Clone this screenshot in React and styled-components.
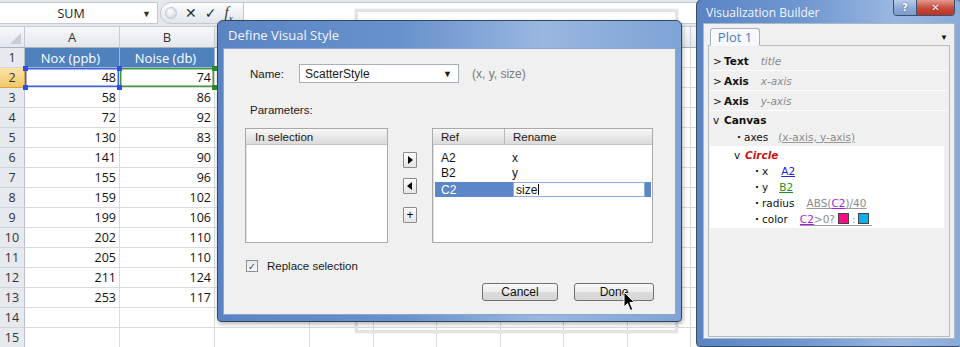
import React from "react";
import styled, { createGlobalStyle } from "styled-components";

const GlobalStyle = createGlobalStyle`
  html, body { margin: 0; padding: 0; background: #fff; }
  body { width: 960px; height: 347px; overflow: hidden; }
  * { box-sizing: border-box; }
`;

const Screen = styled.div`
  position: relative;
  width: 960px;
  height: 347px;
  overflow: hidden;
  background: #fff;
  font-family: "Open Sans", sans-serif;
`;

/* ---------- spreadsheet (background) ---------- */
const FormulaBar = styled.div`
  display: flex;
  height: 27px;
  padding: 2px 0 2px 0;
  background: #e4e8ed;
  border-bottom: 1px solid #c6ccd4;
`;

const NameBox = styled.div`
  display: flex;
  align-items: center;
  width: 158px;
  background: #fff;
  border: 1px solid #c3c9d1;
  border-left: none;
  font-size: 12.5px;
  color: #222;
  span {
    flex: 1;
    text-align: center;
  }
  i {
    font-style: normal;
    font-size: 9px;
    color: #333;
    margin-right: 6px;
  }
`;

const FxPill = styled.div`
  display: flex;
  align-items: center;
  gap: 8px;
  width: 84px;
  padding-left: 4px;
  margin-left: 2px;
  border: 1px solid #c3c9d1;
  border-radius: 11px 0 0 11px;
  background: linear-gradient(#fbfcfd, #e2e6eb);
  color: #2e2e2e;
  font-family: "DejaVu Sans", sans-serif;
  font-size: 14px;
  font-weight: bold;
`;

const Dot = styled.span`
  width: 12px;
  height: 12px;
  border-radius: 50%;
  background: radial-gradient(circle at 40% 35%, #fff, #c9ced5);
  border: 1px solid #c2c7ce;
`;

const Fx = styled.span`
  font-family: "Liberation Serif", serif;
  font-style: italic;
  font-weight: normal;
  font-size: 15px;
  color: #333;
  sub {
    font-size: 9px;
  }
`;

const FormulaInput = styled.div`
  flex: 1;
  background: #fff;
  border: 1px solid #c3c9d1;
  border-left: none;
`;

const Sheet = styled.div`
  display: grid;
  grid-template-columns: 25px 95px 95px 95px repeat(10, 63.5px);
  grid-template-rows: 21px;
  grid-auto-rows: 20px;
  font-size: 12.5px;
  color: #111;
`;

const Corner = styled.div`
  position: relative;
  background: linear-gradient(#f6f7f9, #e4e8ed);
  border-right: 1px solid #c3c9d1;
  border-bottom: 1px solid #a9b0ba;
  &::after {
    content: "";
    position: absolute;
    right: 3px;
    bottom: 3px;
    border-left: 11px solid transparent;
    border-bottom: 11px solid #c9ced6;
  }
`;

const ColHead = styled.div`
  display: flex;
  align-items: center;
  justify-content: center;
  background: linear-gradient(#f7f8fa, #e3e7ec);
  border-right: 1px solid #c8cdd4;
  border-bottom: 1px solid #a9b0ba;
  font-size: 13px;
  color: #333;
`;

const RowHead = styled.div`
  display: flex;
  align-items: center;
  justify-content: center;
  background: ${(p) =>
    p.$active ? "linear-gradient(#fbe3a8, #f2c766)" : "#e6e9ee"};
  border-right: 1px solid ${(p) => (p.$active ? "#d9a443" : "#b9c0c9")};
  border-bottom: 1px solid ${(p) => (p.$active ? "#d9a443" : "#d0d5dc")};
  color: #333;
`;

const Cell = styled.div`
  position: relative;
  display: flex;
  align-items: center;
  justify-content: ${(p) => (p.$head ? "center" : "flex-end")};
  padding-right: 3px;
  background: ${(p) => (p.$head ? "#4f81bd" : "#fff")};
  color: ${(p) => (p.$head ? "#fff" : "#111")};
  font-size: ${(p) => (p.$head ? "13px" : "12.5px")};
  border-right: 1px solid ${(p) => (p.$head ? "#9eb6d6" : "#dadada")};
  border-bottom: 1px solid ${(p) => (p.$head ? "#9eb6d6" : "#dadada")};
  box-shadow: ${(p) =>
    p.$sel === "a"
      ? "inset 0 0 0 1.5px #3e5fe6"
      : p.$sel === "b"
      ? "inset 0 0 0 1.5px #3c9a3c"
      : "none"};
`;

const Handle = styled.span`
  position: absolute;
  width: 5px;
  height: 5px;
  background: ${(p) => p.$c};
  ${(p) => (p.$top ? "top: -2px;" : "bottom: -3px;")}
  ${(p) => (p.$left ? "left: -2px;" : "right: -3px;")}
  z-index: 2;
`;

/* ---------- ghost frame behind the dialog ---------- */
const GhostFrame = styled.div`
  position: absolute;
  left: 355px;
  top: 9px;
  width: 323px;
  height: 324px;
  border: 3px solid #e3e3e3;
  box-shadow: 0 0 1px #c8c8c8;
`;

/* ---------- Define Visual Style dialog ---------- */
const Dialog = styled.div`
  position: absolute;
  left: 217px;
  top: 20px;
  width: 465px;
  height: 302px;
  display: flex;
  flex-direction: column;
  padding: 0 5px 6px 5px;
  border: 1px solid #34455e;
  border-radius: 6px 6px 4px 4px;
  background: linear-gradient(
    90deg,
    #5a83c3 0%,
    #6892cd 40%,
    #9ab7e0 70%,
    #7ea3d6 100%
  );
  box-shadow: 1px 2px 4px rgba(0, 0, 0, 0.3);
`;

const DialogTitle = styled.div`
  height: 27px;
  display: flex;
  align-items: center;
  padding-left: 5px;
  color: #f3f6fb;
  font-family: "Open Sans", sans-serif;
  font-size: 13px;
`;

const DialogBody = styled.div`
  flex: 1;
  display: flex;
  flex-direction: column;
  padding: 15px 21px 0 21px;
  background: #f0f0f0;
  border: 1px solid #8ea7c9;
  font-family: "Liberation Sans", Arial, sans-serif;
  font-size: 11.5px;
  color: #1a1a1a;
`;

const NameRow = styled.div`
  display: flex;
  align-items: center;
  height: 19px;
`;

const Label = styled.span`
  width: ${(p) => p.$w || "auto"};
  padding-left: 5px;
`;

const Combo = styled.div`
  display: flex;
  align-items: center;
  justify-content: space-between;
  width: 160px;
  height: 19px;
  padding: 0 6px 0 5px;
  background: #fff;
  border: 1px solid #a8afb8;
  font-size: 12px;
  i {
    font-style: normal;
    font-size: 9px;
  }
`;

const Hint = styled.span`
  margin-left: 13px;
  color: #7a7a7a;
  font-size: 12px;
`;

const SectionLabel = styled.div`
  margin-top: 20px;
  height: 14px;
  line-height: 14px;
  padding-left: 5px;
`;

const ListsRow = styled.div`
  display: flex;
  margin-top: 11px;
  height: 115px;
`;

const ListBox = styled.div`
  width: ${(p) => p.$w};
  display: flex;
  flex-direction: column;
  background: #fff;
  border: 1px solid #a9a9a9;
  box-shadow: inset 1px 1px 0 #e2e2e2;
`;

const ListHeader = styled.div`
  display: flex;
  height: 16px;
  background: linear-gradient(#f7f7f7, #dadada);
  border-bottom: 1px solid #c4c4c4;
`;

const HeadCell = styled.div`
  display: flex;
  align-items: center;
  width: ${(p) => p.$w || "auto"};
  flex: ${(p) => (p.$w ? "none" : "1")};
  padding-left: ${(p) => p.$pl || "8px"};
  border-right: ${(p) => (p.$w ? "1px solid #b8b8b8" : "none")};
`;

const ListRows = styled.div`
  display: flex;
  flex-direction: column;
  padding-top: 5px;
`;

const ListRow = styled.div`
  display: flex;
  align-items: center;
  height: 15px;
  margin: ${(p) => (p.$sel ? "2px 1px 0 2px" : "0")};
  padding-left: ${(p) => (p.$sel ? "6px" : "8px")};
  background: ${(p) => (p.$sel ? "#5b87c9" : "transparent")};
  color: ${(p) => (p.$sel ? "#fff" : "#111")};
  font-size: 12px;
`;

const RefCol = styled.span`
  width: ${(p) => (p.$sel ? "68px" : "71px")};
`;

const EditBox = styled.span`
  display: flex;
  align-items: center;
  width: 132px;
  height: 15px;
  margin-left: 4px;
  padding-left: 2px;
  background: #fff;
  border: 1px solid #8eb0dd;
  color: #111;
  &::after {
    content: "";
    width: 1px;
    height: 11px;
    margin-left: 1px;
    background: #111;
  }
`;

const ArrowCol = styled.div`
  display: flex;
  flex-direction: column;
  width: 14px;
  margin: 0 15px;
  padding-top: 24px;
`;

const ArrowBtn = styled.button`
  display: flex;
  align-items: center;
  justify-content: center;
  width: 14px;
  height: 16px;
  margin-bottom: ${(p) => p.$mb || "0"};
  padding: 0;
  border: 1px solid #8c8c8c;
  border-radius: 1px;
  background: linear-gradient(#fdfdfd, #e4e4e4);
  color: #000;
  font-size: 12px;
  line-height: 1;
`;

const Triangle = styled.span`
  width: 0;
  height: 0;
  border-top: 4px solid transparent;
  border-bottom: 4px solid transparent;
  ${(p) =>
    p.$dir === "right"
      ? "border-left: 5px solid #000; margin-left: 1px;"
      : "border-right: 5px solid #000; margin-right: 1px;"}
`;

const CheckRow = styled.label`
  display: flex;
  align-items: center;
  gap: 9px;
  margin-top: 17px;
  height: 12px;
  padding-left: 1px;
  font-size: 11.5px;
`;

const CheckBox = styled.span`
  display: flex;
  align-items: center;
  justify-content: center;
  width: 12px;
  height: 12px;
  border: 1px solid #8f8f8f;
  background: linear-gradient(#e9e9e9, #fafafa);
  color: #2c4fab;
  font-size: 10px;
  font-family: "DejaVu Sans", sans-serif;
`;

const ButtonRow = styled.div`
  display: flex;
  justify-content: flex-end;
  gap: 16px;
  margin-top: 11px;
`;

const PushButton = styled.button`
  width: ${(p) => p.$w};
  height: 18px;
  padding: 0;
  border: 1px solid #707070;
  border-radius: 3px;
  background: linear-gradient(#f8f8f8 0%, #ececec 50%, #dcdcdc 51%, #d6d6d6 100%);
  font-family: "Liberation Sans", Arial, sans-serif;
  font-size: 12px;
  color: #111;
`;

const Cursor = styled.svg`
  position: absolute;
  left: 623px;
  top: 291px;
`;

/* ---------- Visualization Builder panel ---------- */
const Builder = styled.div`
  position: absolute;
  left: 696px;
  top: -1px;
  width: 266px;
  height: 348px;
  display: flex;
  flex-direction: column;
  padding: 0 6px 7px 6px;
  border: 1px solid #3a4b63;
  border-radius: 6px 6px 4px 4px;
  background: linear-gradient(
    90deg,
    #5b84c4 0%,
    #6f97d0 40%,
    #9ab7e0 75%,
    #8aabd9 100%
  );
`;

const BuilderTitle = styled.div`
  display: flex;
  height: 23px;
  color: #f3f6fb;
  font-size: 12px;
  span {
    padding: 4px 0 0 3px;
  }
`;

const WinButtons = styled.div`
  display: flex;
  margin-left: auto;
  height: 16px;
  border: 1px solid #3d4f6a;
  border-top: none;
  border-radius: 0 0 4px 4px;
  overflow: hidden;
`;

const WinBtn = styled.div`
  display: flex;
  align-items: center;
  justify-content: center;
  width: ${(p) => p.$w};
  background: ${(p) =>
    p.$close
      ? "linear-gradient(#e39a8e, #c84a3b 55%, #b83424)"
      : "linear-gradient(#b7cbe8, #8eaad6 55%, #7b9bcd)"};
  border-left: ${(p) => (p.$close ? "1px solid #3d4f6a" : "none")};
  color: #fff;
  font-family: "DejaVu Sans", sans-serif;
  font-size: 10px;
  font-weight: bold;
  text-shadow: 0 0 2px rgba(0, 0, 0, 0.5);
`;

const BuilderBody = styled.div`
  flex: 1;
  display: flex;
  flex-direction: column;
  padding: 4px 4px 1px 4px;
  background: #f0f0f0;
  border: 1px solid #aab8cb;
`;

const TabStrip = styled.div`
  display: flex;
  align-items: flex-end;
  height: 17px;
  padding-left: 2px;
  i {
    margin-left: auto;
    align-self: center;
    margin-right: 2px;
    font-style: normal;
    font-size: 8px;
    color: #111;
  }
`;

const Tab = styled.div`
  display: flex;
  align-items: center;
  justify-content: center;
  width: 50px;
  height: 18px;
  margin-bottom: -1px;
  background: #f6f8fb;
  border: 1px solid #a6b0bf;
  border-bottom: 1px solid #f6f8fb;
  border-radius: 3px 3px 0 0;
  color: #4a7cc2;
  font-size: 13px;
  position: relative;
  z-index: 1;
`;

const TreeBox = styled.div`
  flex: 1;
  display: flex;
  flex-direction: column;
  padding: 5px 3px 0 1px;
  background: #f0f0f0;
  border: 1px solid #b6bcc4;
  font-family: "DejaVu Sans", sans-serif;
  font-size: 10.5px;
  color: #111;
`;

const TreeRow = styled.div`
  display: flex;
  align-items: center;
  height: ${(p) => p.$h || "20px"};
  padding-left: ${(p) => p.$indent || "3px"};
  border-bottom: ${(p) => (p.$sep ? "1px solid #fdfdfd" : "none")};
`;

const Toggle = styled.span`
  width: 11px;
  color: #111;
`;

const Bullet = styled.span`
  width: 7px;
  font-weight: bold;
`;

const Node = styled.span`
  font-weight: ${(p) => (p.$bold ? "bold" : "normal")};
  font-style: ${(p) => (p.$italic ? "italic" : "normal")};
  color: ${(p) => p.$color || "#111"};
`;

const Muted = styled.span`
  margin-left: ${(p) => p.$ml || "12px"};
  font-style: ${(p) => (p.$italic ? "italic" : "normal")};
  color: #8a8a8a;
  text-decoration: ${(p) => (p.$u ? "underline" : "none")};
  text-decoration-color: #9a9a9a;
`;

const Ref = styled.span`
  color: ${(p) => p.$color};
  text-decoration: underline;
`;

const Expr = styled.span`
  display: flex;
  align-items: center;
  margin-left: 12px;
  color: #8a8a8a;
  border-bottom: 1px solid #9a9a9a;
  line-height: 12px;
`;

const Swatch = styled.span`
  display: inline-block;
  width: 11px;
  height: 11px;
  margin: 0 3px;
  background: ${(p) => p.$c};
  border: 1px solid #444;
`;

const CircleBlock = styled.div`
  display: flex;
  flex-direction: column;
  margin-top: 1px;
  margin-right: 2px;
  padding-top: 1px;
  padding-bottom: 1px;
  background: #fff;
`;

// only A and B are visible; the other headers sit under the dialogs
const columns = ["A", "B", "", "", "", "", "", "", "", "", "", "", ""];
const data = [
  [48, 74],
  [58, 86],
  [72, 92],
  [130, 83],
  [141, 90],
  [155, 96],
  [159, 102],
  [199, 106],
  [202, 110],
  [205, 110],
  [211, 124],
  [253, 117],
];

const SheetRows = () => {
  const rows = [];
  for (let r = 1; r <= 15; r++) {
    const cells = [];
    for (let c = 0; c < columns.length; c++) {
      let text = "";
      let head = false;
      let sel;
      if (r === 1 && c < 2) {
        text = c === 0 ? "Nox (ppb)" : "Noise (db)";
        head = true;
      } else if (r >= 2 && r <= 13 && c < 2) {
        text = data[r - 2][c];
      }
      if (r === 2 && c === 0) sel = "a";
      if (r === 2 && c === 1) sel = "b";
      cells.push(
        <Cell key={c} $head={head} $sel={sel}>
          {text}
          {sel === "a" && (
            <>
              <Handle $c="#2f4fe0" $top $left />
              <Handle $c="#2f4fe0" $top />
              <Handle $c="#2f4fe0" $left />
              <Handle $c="#2f4fe0" />
            </>
          )}
          {sel === "b" && (
            <>
              <Handle $c="#2a8a2a" $top />
              <Handle $c="#2a8a2a" />
            </>
          )}
        </Cell>
      );
    }
    rows.push(
      <React.Fragment key={r}>
        <RowHead $active={r === 2}>{r}</RowHead>
        {cells}
      </React.Fragment>
    );
  }
  return rows;
};

const App = () => {
  return (
    <Screen>
      <GlobalStyle />

      {/* Excel in the background */}
      <FormulaBar>
        <NameBox>
          <span>SUM</span>
          <i>▼</i>
        </NameBox>
        <FxPill>
          <Dot />
          <span>✕</span>
          <span>✓</span>
          <Fx>
            f<sub>x</sub>
          </Fx>
        </FxPill>
        <FormulaInput />
      </FormulaBar>
      <Sheet>
        <Corner />
        {columns.map((c, i) => (
          <ColHead key={i}>{c}</ColHead>
        ))}
        <SheetRows />
      </Sheet>

      <GhostFrame />

      {/* Define Visual Style */}
      <Dialog>
        <DialogTitle>Define Visual Style</DialogTitle>
        <DialogBody>
          <NameRow>
            <Label $w="54px">Name:</Label>
            <Combo>
              <span>ScatterStyle</span>
              <i>▼</i>
            </Combo>
            <Hint>(x, y, size)</Hint>
          </NameRow>
          <SectionLabel>Parameters:</SectionLabel>
          <ListsRow>
            <ListBox $w="143px">
              <ListHeader>
                <HeadCell $pl="9px">In selection</HeadCell>
              </ListHeader>
            </ListBox>
            <ArrowCol>
              <ArrowBtn $mb="10px">
                <Triangle $dir="right" />
              </ArrowBtn>
              <ArrowBtn $mb="13px">
                <Triangle $dir="left" />
              </ArrowBtn>
              <ArrowBtn>+</ArrowBtn>
            </ArrowCol>
            <ListBox $w="221px">
              <ListHeader>
                <HeadCell $w="72px">Ref</HeadCell>
                <HeadCell>Rename</HeadCell>
              </ListHeader>
              <ListRows>
                <ListRow>
                  <RefCol>A2</RefCol>x
                </ListRow>
                <ListRow>
                  <RefCol>B2</RefCol>y
                </ListRow>
                <ListRow $sel>
                  <RefCol $sel>C2</RefCol>
                  <EditBox>size</EditBox>
                </ListRow>
              </ListRows>
            </ListBox>
          </ListsRow>
          <CheckRow>
            <CheckBox>✓</CheckBox>
            Replace selection
          </CheckRow>
          <ButtonRow>
            <PushButton $w="76px">Cancel</PushButton>
            <PushButton $w="80px">Done</PushButton>
          </ButtonRow>
        </DialogBody>
      </Dialog>

      <Cursor width="13" height="21" viewBox="0 0 13 21">
        <path
          d="M1 1 L1 16 L4.5 12.5 L7.5 19.5 L9.8 18.5 L6.9 11.6 L11.5 11.6 Z"
          fill="#000"
          stroke="#fff"
          strokeWidth="1"
        />
      </Cursor>

      {/* Visualization Builder */}
      <Builder>
        <BuilderTitle>
          <span>Visualization Builder</span>
          <WinButtons>
            <WinBtn $w="22px">?</WinBtn>
            <WinBtn $w="38px" $close>
              ✕
            </WinBtn>
          </WinButtons>
        </BuilderTitle>
        <BuilderBody>
          <TabStrip>
            <Tab>Plot 1</Tab>
            <i>▼</i>
          </TabStrip>
          <TreeBox>
            <TreeRow $sep>
              <Toggle>&gt;</Toggle>
              <Node $bold>Text</Node>
              <Muted $italic>title</Muted>
            </TreeRow>
            <TreeRow $sep>
              <Toggle>&gt;</Toggle>
              <Node $bold>Axis</Node>
              <Muted $italic>x-axis</Muted>
            </TreeRow>
            <TreeRow $sep>
              <Toggle>&gt;</Toggle>
              <Node $bold>Axis</Node>
              <Muted $italic>y-axis</Muted>
            </TreeRow>
            <TreeRow $h="17px">
              <Toggle>v</Toggle>
              <Node $bold>Canvas</Node>
            </TreeRow>
            <TreeRow $h="17px" $indent="27px">
              <Bullet>·</Bullet>
              <Node>axes</Node>
              <Muted $u $ml="10px">
                (x-axis, y-axis)
              </Muted>
            </TreeRow>
            <CircleBlock>
              <TreeRow $h="16px" $indent="24px">
                <Toggle>v</Toggle>
                <Node $bold $italic $color="#cc1111">
                  Circle
                </Node>
              </TreeRow>
              <TreeRow $h="16px" $indent="45px">
                <Bullet>·</Bullet>
                <Node>x</Node>
                <Muted $ml="13px">
                  <Ref $color="#2020e8">A2</Ref>
                </Muted>
              </TreeRow>
              <TreeRow $h="16px" $indent="45px">
                <Bullet>·</Bullet>
                <Node>y</Node>
                <Muted $ml="11px">
                  <Ref $color="#238f23">B2</Ref>
                </Muted>
              </TreeRow>
              <TreeRow $h="16px" $indent="45px">
                <Bullet>·</Bullet>
                <Node>radius</Node>
                <Muted $u $ml="12px">
                  ABS(<Ref $color="#a31fe6">C2</Ref>)/40
                </Muted>
              </TreeRow>
              <TreeRow $h="16px" $indent="45px">
                <Bullet>·</Bullet>
                <Node>color</Node>
                <Expr>
                  <Ref $color="#a31fe6">C2</Ref>&gt;0?
                  <Swatch $c="#ff0a86" />:
                  <Swatch $c="#0aaeea" />
                </Expr>
              </TreeRow>
            </CircleBlock>
          </TreeBox>
        </BuilderBody>
      </Builder>
    </Screen>
  );
};

export default App;
